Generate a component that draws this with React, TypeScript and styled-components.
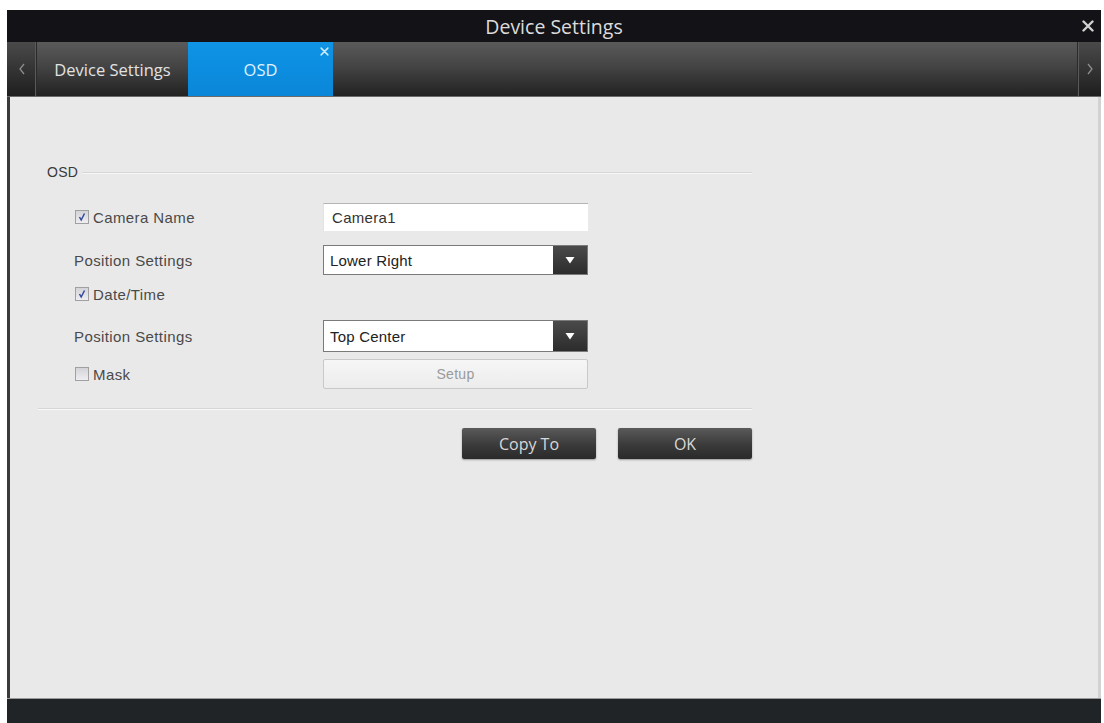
import styled, { createGlobalStyle } from "styled-components";

const GlobalStyle = createGlobalStyle`
  html, body {
    margin: 0;
    padding: 0;
    background: #ffffff;
  }
  * {
    box-sizing: border-box;
  }
`;

const Page = styled.div`
  height: 723px;
  padding: 10px 3px 0 7px;
  background: #ffffff;
`;

const Window = styled.div`
  height: 100%;
  display: flex;
  flex-direction: column;
`;

const TitleBar = styled.div`
  height: 32px;
  flex: none;
  background: #131317;
  display: flex;
  align-items: center;
  justify-content: center;
  position: relative;
  color: #dcdcdc;
  font-family: "Open Sans", "DejaVu Sans", sans-serif;
  font-size: 19.5px;
`;

const CloseButton = styled.span`
  position: absolute;
  right: 7px;
  top: 10px;
  width: 12px;
  height: 12px;
  display: flex;
`;

const TabBar = styled.div`
  height: 55px;
  flex: none;
  display: flex;
  background: linear-gradient(#5a5a5a 0%, #444 45%, #222 100%);
  border-bottom: 1px solid #6a6a6a;
`;

const ArrowButton = styled.div<{ $side: "left" | "right" }>`
  width: ${(p) => (p.$side === "left" ? "30px" : "24px")};
  flex: none;
  display: flex;
  align-items: center;
  justify-content: center;
  background: linear-gradient(#4a4a4a, #1e1e1e);
  ${(p) =>
    p.$side === "left"
      ? "border-right: 1px solid #2a2a2a; box-shadow: inset -1px 0 0 #5a5a5a;"
      : "border-left: 1px solid #2a2a2a; box-shadow: inset 1px 0 0 #5a5a5a;"}
`;

const Tab = styled.div<{ $active?: boolean; $width: number }>`
  width: ${(p) => p.$width}px;
  flex: none;
  display: flex;
  align-items: center;
  justify-content: center;
  position: relative;
  font-family: "Open Sans", "DejaVu Sans", sans-serif;
  font-size: 16.5px;
  color: ${(p) => (p.$active ? "#dff2ff" : "#e2e2e2")};
  background: ${(p) =>
    p.$active ? "linear-gradient(#0f94e6, #0a86d8)" : "transparent"};
`;

const TabClose = styled.span`
  position: absolute;
  top: 5px;
  right: 4px;
  width: 9px;
  height: 9px;
  display: flex;
`;

const TabFill = styled.div`
  flex: 1;
`;

const Content = styled.div`
  flex: 1;
  background: #e9e9e9;
  border-left: 3px solid #3a3a3a;
  border-right: 3px solid #d2d2d2;
  padding: 65px 0 0 28px;
  font-family: "Liberation Sans", Arial, sans-serif;
`;

const Panel = styled.div`
  width: 714px;
  display: flex;
  flex-direction: column;
`;

const GroupHeader = styled.div`
  height: 20px;
  display: flex;
  align-items: center;
  gap: 4px;
  padding-left: 9px;
  font-size: 14px;
  color: #3a3a3a;
  letter-spacing: 0.3px;
  &::after {
    content: "";
    flex: 1;
    height: 1px;
    background: #d6d6d6;
    box-shadow: 0 1px 0 #f6f6f6;
  }
`;

const Row = styled.div<{ $top: number; $height: number }>`
  margin-top: ${(p) => p.$top}px;
  height: ${(p) => p.$height}px;
  display: flex;
  align-items: center;
  padding-left: 36px;
`;

const Label = styled.label`
  width: 249px;
  flex: none;
  display: flex;
  align-items: center;
  gap: 4px;
  font-size: 15px;
  letter-spacing: 0.4px;
  color: #4a4a4a;
`;

const Check = styled.span`
  width: 14px;
  height: 14px;
  flex: none;
  margin-left: 1px;
  border: 1px solid #a0a0a0;
  background: linear-gradient(#d4d4d8, #eeeef2);
  display: flex;
  align-items: center;
  justify-content: center;
`;

const TextInput = styled.div`
  width: 265px;
  height: 100%;
  background: #ffffff;
  border-top: 1px solid #b4b4b4;
  border-left: 1px solid #e2e2e2;
  display: flex;
  align-items: center;
  padding-left: 8px;
  font-size: 15px;
  color: #333;
  letter-spacing: 0.3px;
`;

const Select = styled.div`
  width: 265px;
  height: 100%;
  background: #ffffff;
  border: 1px solid #7a7a7a;
  display: flex;
  align-items: stretch;
  font-size: 15px;
  color: #222;
  letter-spacing: 0.2px;
`;

const SelectValue = styled.span`
  flex: 1;
  display: flex;
  align-items: center;
  padding-left: 6px;
`;

const SelectArrow = styled.span`
  width: 34px;
  flex: none;
  background: linear-gradient(#4a4a4a, #2c2c2c);
  display: flex;
  align-items: center;
  justify-content: center;
`;

const LightButton = styled.div`
  width: 265px;
  height: 100%;
  border: 1px solid #c9c9c9;
  border-radius: 2px;
  background: linear-gradient(#f6f6f6, #ececec);
  display: flex;
  align-items: center;
  justify-content: center;
  font-size: 14px;
  color: #9a9a9a;
  letter-spacing: 0.3px;
`;

const Divider = styled.div`
  margin-top: 19px;
  height: 1px;
  background: #d6d6d6;
  box-shadow: 0 1px 0 #f8f8f8;
`;

const ButtonRow = styled.div`
  margin-top: 19px;
  display: flex;
  justify-content: flex-end;
  gap: 22px;
`;

const DarkButton = styled.div`
  width: 134px;
  height: 31px;
  border-radius: 2px;
  background: linear-gradient(#5a5a5a, #3a3a3a 55%, #2a2a2a);
  box-shadow: 0 1px 2px rgba(0, 0, 0, 0.35);
  display: flex;
  align-items: center;
  justify-content: center;
  font-family: "Open Sans", "DejaVu Sans", sans-serif;
  font-size: 16px;
  color: #d8d8d8;
`;

const Footer = styled.div`
  height: 25px;
  flex: none;
  background: #212427;
  border-top: 1px solid #9a9a9a;
`;

const CrossIcon = ({ size, color, weight }: { size: number; color: string; weight: number }) => (
  <svg width={size} height={size} viewBox="0 0 16 16">
    <path d="M2 2 L14 14 M14 2 L2 14" stroke={color} strokeWidth={weight} strokeLinecap="round" />
  </svg>
);

const Chevron = ({ dir }: { dir: "left" | "right" }) => (
  <svg width="6" height="12" viewBox="0 0 6 12">
    <path
      d={dir === "left" ? "M5 1 L1 6 L5 11" : "M1 1 L5 6 L1 11"}
      fill="none"
      stroke="#8c8c8c"
      strokeWidth="1.3"
    />
  </svg>
);

const CheckMark = () => (
  <svg width="10" height="10" viewBox="0 0 10 10">
    <path d="M2.5 5 L4.2 8 L7.5 1.5" fill="none" stroke="#34489a" strokeWidth="1.5" />
  </svg>
);

const DownTriangle = () => (
  <svg width="10" height="8" viewBox="0 0 10 8">
    <path d="M0.5 1 H9.5 L5 7.5 Z" fill="#ffffff" />
  </svg>
);

const CheckField = ({ label, checked }: { label: string; checked?: boolean }) => (
  <Label>
    <Check>{checked && <CheckMark />}</Check>
    {label}
  </Label>
);

const App = () => {
  return (
    <>
      <GlobalStyle />
      <Page>
        <Window>
          <TitleBar>
            Device Settings
            <CloseButton>
              <CrossIcon size={12} color="#d0d0d0" weight={3.2} />
            </CloseButton>
          </TitleBar>
          <TabBar>
            <ArrowButton $side="left">
              <Chevron dir="left" />
            </ArrowButton>
            <Tab $width={151}>Device Settings</Tab>
            <Tab $active $width={145}>
              OSD
              <TabClose>
                <CrossIcon size={9} color="#cfeaff" weight={2.6} />
              </TabClose>
            </Tab>
            <TabFill />
            <ArrowButton $side="right">
              <Chevron dir="right" />
            </ArrowButton>
          </TabBar>
          <Content>
            <Panel>
              <GroupHeader>OSD</GroupHeader>
              <Row $top={21} $height={28}>
                <CheckField label="Camera Name" checked />
                <TextInput>Camera1</TextInput>
              </Row>
              <Row $top={14} $height={30}>
                <Label>Position Settings</Label>
                <Select>
                  <SelectValue>Lower Right</SelectValue>
                  <SelectArrow>
                    <DownTriangle />
                  </SelectArrow>
                </Select>
              </Row>
              <Row $top={9} $height={20}>
                <CheckField label="Date/Time" checked />
              </Row>
              <Row $top={16} $height={32}>
                <Label>Position Settings</Label>
                <Select>
                  <SelectValue>Top Center</SelectValue>
                  <SelectArrow>
                    <DownTriangle />
                  </SelectArrow>
                </Select>
              </Row>
              <Row $top={7} $height={30}>
                <CheckField label="Mask" />
                <LightButton>Setup</LightButton>
              </Row>
              <Divider />
              <ButtonRow>
                <DarkButton>Copy To</DarkButton>
                <DarkButton>OK</DarkButton>
              </ButtonRow>
            </Panel>
          </Content>
          <Footer />
        </Window>
      </Page>
    </>
  );
};

export default App;
